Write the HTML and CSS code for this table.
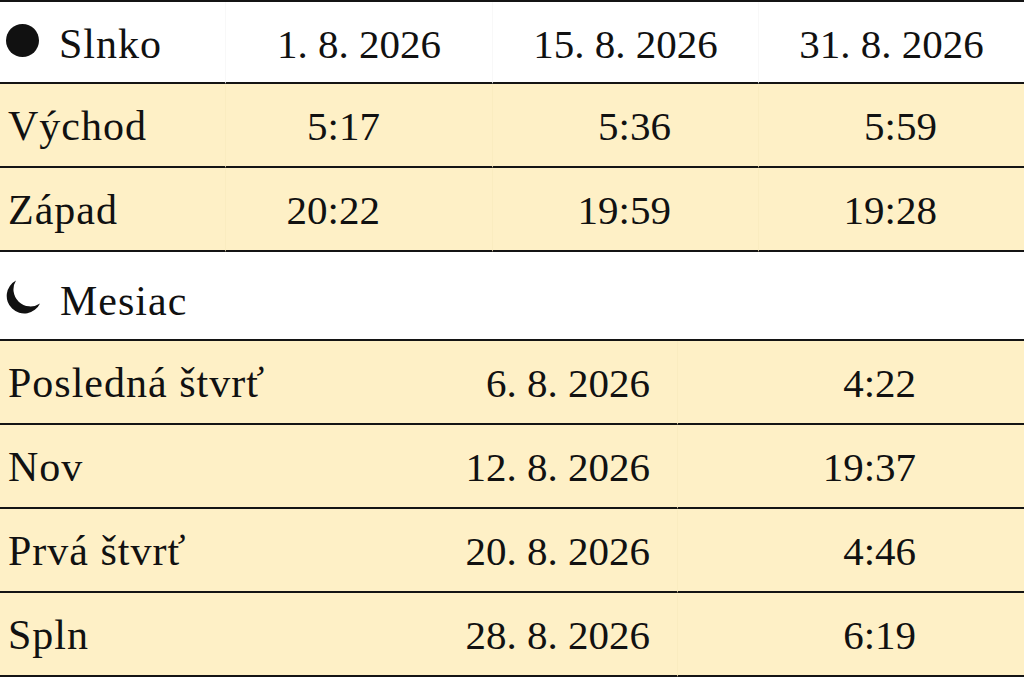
FILE: index.html
```html
<!DOCTYPE html>
<html lang="sk">
<head>
<meta charset="utf-8">
<title>Slnko a Mesiac</title>
<link rel="stylesheet" href="styles.css">
</head>
<body>
<table class="tbl sun">
  <colgroup><col class="c1"><col class="c2"><col class="c3"><col class="c4"></colgroup>
  <tr class="head">
    <th class="label"><span class="title"><svg class="ico" width="33" height="33" viewBox="0 0 33 33"><circle cx="16.5" cy="16.5" r="16.5" fill="#111"/></svg><span>Slnko</span></span></th>
    <th class="ctr">1. 8. 2026</th>
    <th class="ctr">15. 8. 2026</th>
    <th class="ctr">31. 8. 2026</th>
  </tr>
  <tr class="row">
    <td class="label">Východ</td>
    <td class="v2">5:17</td>
    <td class="v3">5:36</td>
    <td class="v4">5:59</td>
  </tr>
  <tr class="row">
    <td class="label">Západ</td>
    <td class="v2">20:22</td>
    <td class="v3">19:59</td>
    <td class="v4">19:28</td>
  </tr>
</table>
<table class="tbl moon">
  <colgroup><col class="m1"><col class="m2"><col class="m3"></colgroup>
  <tr class="mhead">
    <th class="label" colspan="3"><span class="title"><svg class="ico" width="34" height="34" viewBox="0 0 34 34"><path d="M10 0.5 A17.5 17.5 0 1 0 34 23.5 A17 17 0 0 1 10 0.5 Z" fill="#111"/></svg><span>Mesiac</span></span></th>
  </tr>
  <tr class="row">
    <td class="label">Posledná štvrť</td>
    <td class="d">6. 8. 2026</td>
    <td class="t">4:22</td>
  </tr>
  <tr class="row">
    <td class="label">Nov</td>
    <td class="d">12. 8. 2026</td>
    <td class="t">19:37</td>
  </tr>
  <tr class="row">
    <td class="label">Prvá štvrť</td>
    <td class="d">20. 8. 2026</td>
    <td class="t">4:46</td>
  </tr>
  <tr class="row">
    <td class="label">Spln</td>
    <td class="d">28. 8. 2026</td>
    <td class="t">6:19</td>
  </tr>
</table>
</body>
</html>
```
FILE: styles.css
```css
html, body {
  margin: 0;
  padding: 0;
  background: #ffffff;
}
body {
  font-family: "Liberation Serif", "DejaVu Serif", serif;
  font-size: 41px;
  color: #111111;
  width: 1024px;
}
.tbl {
  width: 1024px;
  border-collapse: separate;
  border-spacing: 0;
  table-layout: fixed;
}
.sun { border-top: 2px solid #141414; }
.c1 { width: 225px; }
.c2 { width: 267px; }
.c3 { width: 266px; }
.c4 { width: 266px; }
.m1 { width: 330px; }
.m2 { width: 347px; }
.m3 { width: 347px; }
th, td {
  font-weight: normal;
  line-height: 47px;
  padding: 19px 0 16px 0;
  border-bottom: 2px solid #141414;
  white-space: nowrap;
}
.row td { background: #fef0c6; }
.sun .row td + td { border-left: 1px solid #faecc0; }
.moon .row td.t { border-left: 1px solid #faecc0; }
.head th + th { border-left: 1px solid #f8f8f8; }
.head th { padding-bottom: 14px; }
.mhead th { padding-top: 26px; padding-bottom: 14px; }
.label { text-align: left; padding-left: 8px; }
td.label, .title > span { font-size: 42px; letter-spacing: 1px; }
.title { display: inline-flex; align-items: baseline; gap: 20px; margin-left: -2px; }
.ico { display: block; align-self: flex-end; margin-bottom: 11px; }
.ctr { text-align: center; }
.v2 { text-align: right; padding-right: 112px; }
.v3 { text-align: right; padding-right: 87px; }
.v4 { text-align: right; padding-right: 87px; }
.d { text-align: right; padding-right: 27px; }
.t { text-align: right; padding-right: 108px; }
```
